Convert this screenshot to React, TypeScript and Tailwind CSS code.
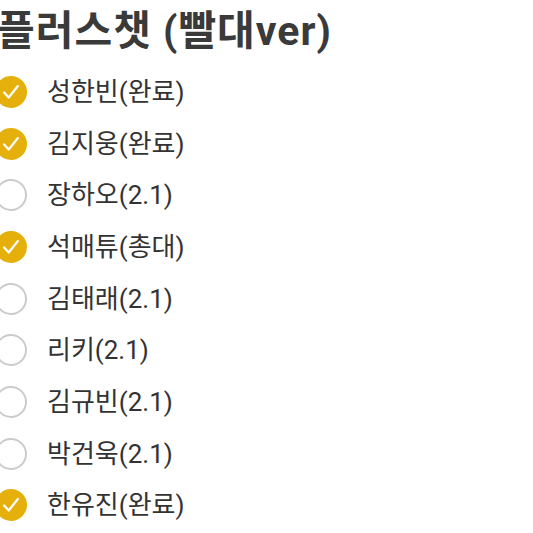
import React from "react";

interface Member {
    name: string;
    done: boolean;
}

const members: Member[] = [
    {name: "성한빈(완료)", done: true},
    {name: "김지웅(완료)", done: true},
    {name: "장하오(2.1)", done: false},
    {name: "석매튜(총대)", done: true},
    {name: "김태래(2.1)", done: false},
    {name: "리키(2.1)", done: false},
    {name: "김규빈(2.1)", done: false},
    {name: "박건욱(2.1)", done: false},
    {name: "한유진(완료)", done: true},
];

const CheckCircle = ({done}: { done: boolean }) => {
    if (!done) {
        return <div className="w-[32px] h-[32px] rounded-full border-2 border-[#cbcbcb] bg-white shrink-0"/>;
    }
    return (
        <div className="w-[32px] h-[32px] rounded-full bg-[#e6b00c] flex items-center justify-center shrink-0">
            <svg width="22" height="22" viewBox="0 0 24 24" fill="none" stroke="white" strokeWidth="2.4"
                 strokeLinecap="round" strokeLinejoin="round">
                <path d="M4.5 12.5l5 5.5L19.5 5.5"/>
            </svg>
        </div>
    );
};

export default function App() {
    return (
        <div className="w-[533px] h-[533px] overflow-hidden bg-white text-[#333333]"
             style={{fontFamily: 'Roboto, "Noto Sans CJK KR", "Noto Sans", sans-serif'}}>
            <h1 className="text-[41px] font-bold leading-[50px] pt-[6px] -ml-[3px] text-[#3a3a3a] whitespace-nowrap tracking-[1px]">
                플러스챗 (빨대ver)
            </h1>
            <div className="flex flex-col -ml-[5px] mt-[10px]">
                {members.map((m, i) => (
                    <div key={i} className="flex items-center h-[51.7px] gap-[20px]">
                        <CheckCircle done={m.done}/>
                        <span className="text-[26px] leading-none">{m.name}</span>
                    </div>
                ))}
            </div>
        </div>
    );
}
